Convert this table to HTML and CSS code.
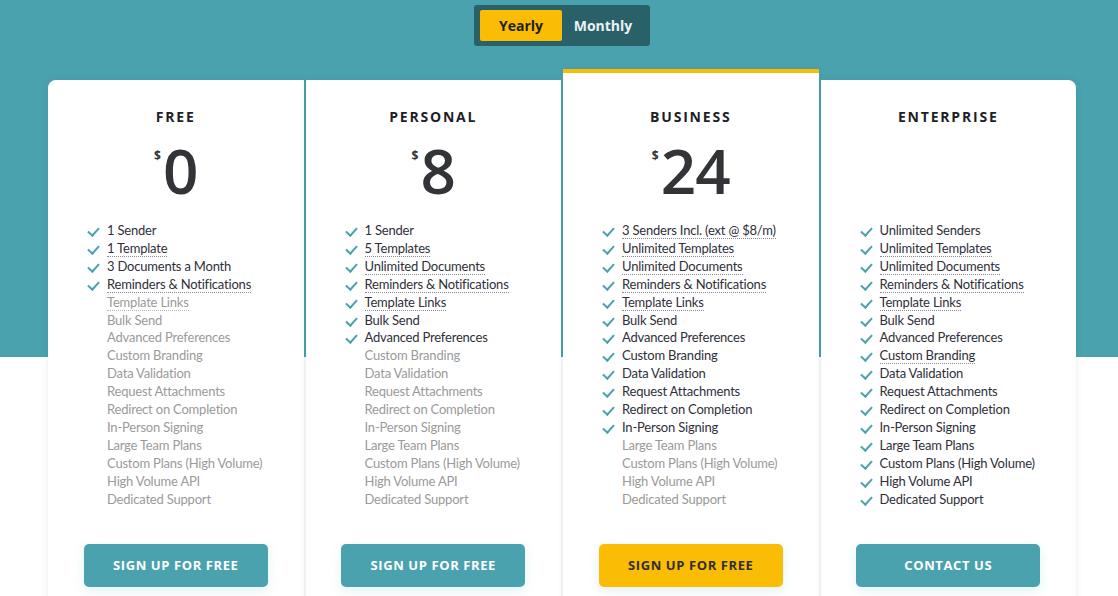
FILE: index.html
```html
<!DOCTYPE html>
<html>
<head>
<meta charset="utf-8">
<link rel="stylesheet" href="styles.css">
</head>
<body>
<div class="page">
  <div class="toggle">
    <span class="toggle-btn active">Yearly</span>
    <span class="toggle-btn">Monthly</span>
  </div>
  <div class="plans">
    <div class="card">
      <h2 class="plan-name">FREE</h2>
      <div class="price"><span class="cur">$</span>0</div>
      <ul class="features">
        <li class="on">1 Sender</li>
        <li class="on"><span class="tip">1 Template</span></li>
        <li class="on">3 Documents a Month</li>
        <li class="on"><span class="tip">Reminders &amp; Notifications</span></li>
        <li class="off"><span class="tip">Template Links</span></li>
        <li class="off">Bulk Send</li>
        <li class="off">Advanced Preferences</li>
        <li class="off">Custom Branding</li>
        <li class="off">Data Validation</li>
        <li class="off">Request Attachments</li>
        <li class="off">Redirect on Completion</li>
        <li class="off">In-Person Signing</li>
        <li class="off">Large Team Plans</li>
        <li class="off">Custom Plans (High Volume)</li>
        <li class="off">High Volume API</li>
        <li class="off">Dedicated Support</li>
      </ul>
      <a class="btn">SIGN UP FOR FREE</a>
    </div>
    <div class="card">
      <h2 class="plan-name">PERSONAL</h2>
      <div class="price"><span class="cur">$</span>8</div>
      <ul class="features">
        <li class="on">1 Sender</li>
        <li class="on"><span class="tip">5 Templates</span></li>
        <li class="on"><span class="tip">Unlimited Documents</span></li>
        <li class="on"><span class="tip">Reminders &amp; Notifications</span></li>
        <li class="on"><span class="tip">Template Links</span></li>
        <li class="on">Bulk Send</li>
        <li class="on">Advanced Preferences</li>
        <li class="off">Custom Branding</li>
        <li class="off">Data Validation</li>
        <li class="off">Request Attachments</li>
        <li class="off">Redirect on Completion</li>
        <li class="off">In-Person Signing</li>
        <li class="off">Large Team Plans</li>
        <li class="off">Custom Plans (High Volume)</li>
        <li class="off">High Volume API</li>
        <li class="off">Dedicated Support</li>
      </ul>
      <a class="btn">SIGN UP FOR FREE</a>
    </div>
    <div class="card featured">
      <h2 class="plan-name">BUSINESS</h2>
      <div class="price"><span class="cur">$</span>24</div>
      <ul class="features">
        <li class="on"><span class="tip">3 Senders Incl. (ext @ $8/m)</span></li>
        <li class="on"><span class="tip">Unlimited Templates</span></li>
        <li class="on"><span class="tip">Unlimited Documents</span></li>
        <li class="on"><span class="tip">Reminders &amp; Notifications</span></li>
        <li class="on"><span class="tip">Template Links</span></li>
        <li class="on">Bulk Send</li>
        <li class="on">Advanced Preferences</li>
        <li class="on">Custom Branding</li>
        <li class="on">Data Validation</li>
        <li class="on">Request Attachments</li>
        <li class="on">Redirect on Completion</li>
        <li class="on">In-Person Signing</li>
        <li class="off">Large Team Plans</li>
        <li class="off">Custom Plans (High Volume)</li>
        <li class="off">High Volume API</li>
        <li class="off">Dedicated Support</li>
      </ul>
      <a class="btn btn-yellow">SIGN UP FOR FREE</a>
    </div>
    <div class="card">
      <h2 class="plan-name">ENTERPRISE</h2>
      <div class="price price-empty"></div>
      <ul class="features">
        <li class="on">Unlimited Senders</li>
        <li class="on"><span class="tip">Unlimited Templates</span></li>
        <li class="on"><span class="tip">Unlimited Documents</span></li>
        <li class="on"><span class="tip">Reminders &amp; Notifications</span></li>
        <li class="on"><span class="tip">Template Links</span></li>
        <li class="on">Bulk Send</li>
        <li class="on">Advanced Preferences</li>
        <li class="on"><span class="tip">Custom Branding</span></li>
        <li class="on">Data Validation</li>
        <li class="on">Request Attachments</li>
        <li class="on">Redirect on Completion</li>
        <li class="on">In-Person Signing</li>
        <li class="on">Large Team Plans</li>
        <li class="on">Custom Plans (High Volume)</li>
        <li class="on">High Volume API</li>
        <li class="on">Dedicated Support</li>
      </ul>
      <a class="btn">CONTACT US</a>
    </div>
  </div>
</div>
</body>
</html>
```

FILE: styles.css
```css
html, body {
  margin: 0;
  padding: 0;
}
body {
  background: linear-gradient(#4aa2ae 0, #4aa2ae 357px, #ffffff 357px);
  font-family: "Lato", "Liberation Sans", sans-serif;
  color: #2f2f3a;
  overflow: hidden;
}
.page {
  width: 1028px;
  margin-left: 48px;
}
.toggle {
  display: flex;
  width: 164px;
  margin: 5px auto 0;
  padding: 5px 6px;
  background: #2a6068;
  border-radius: 3px;
}
.toggle-btn {
  flex: 1;
  height: 31px;
  line-height: 31px;
  text-align: center;
  font-family: "Open Sans", "Liberation Sans", sans-serif;
  font-weight: 700;
  font-size: 14px;
  color: #e8f2f3;
  border-radius: 2px;
}
.toggle-btn.active {
  background: #fbbc05;
  color: #1d1d1d;
}
.plans {
  display: flex;
  gap: 2px;
  align-items: flex-start;
  margin-top: 34px;
}
.card {
  flex: 1;
  background: #fff;
  padding-top: 27px;
  padding-bottom: 40px;
  box-shadow: 0 0 6px rgba(40, 80, 90, 0.10);
  display: flex;
  flex-direction: column;
}
.card:first-child {
  border-top-left-radius: 8px;
}
.card:last-child {
  border-top-right-radius: 8px;
}
.card.featured {
  margin-top: -11px;
  border-top: 4px solid #fbbc05;
  padding-top: 34px;
}
.plan-name {
  margin: 0;
  text-align: center;
  font-family: "Open Sans", "Liberation Sans", sans-serif;
  font-weight: 700;
  font-size: 14px;
  line-height: 20px;
  letter-spacing: 1.8px;
  color: #1e1e28;
}
.price {
  height: 62px;
  margin-top: 12px;
  text-align: center;
  font-family: "Open Sans", "Liberation Sans", sans-serif;
  font-weight: 600;
  font-size: 62px;
  line-height: 62px;
  color: #333438;
  letter-spacing: -1px;
}
.cur {
  display: inline-block;
  vertical-align: top;
  font-size: 12px;
  line-height: 12px;
  font-weight: 700;
  margin-top: 11px;
  margin-right: 2px;
  letter-spacing: 0;
}
.features {
  list-style: none;
  margin: 21px 0 0;
  padding: 0 0 0 39px;
  font-size: 13px;
  line-height: 17.9px;
  letter-spacing: -0.2px;
}
.features li {
  position: relative;
  padding-left: 20px;
  white-space: nowrap;
}
.features li.on::before {
  content: "";
  position: absolute;
  left: 1px;
  top: 5px;
  width: 9px;
  height: 5px;
  border-left: 2px solid #4aa2ae;
  border-bottom: 2px solid #4aa2ae;
  transform: rotate(-48deg);
  transform-origin: center;
}
.features li.off {
  color: #9a9a9a;
}
.tip {
  border-bottom: 1px dotted #8a8a96;
}
.off .tip {
  border-bottom-color: #b5b5b5;
}
.btn {
  display: block;
  align-self: center;
  width: 184px;
  height: 43px;
  line-height: 42px;
  margin-top: 35px;
  text-align: center;
  border-radius: 5px;
  background: #4aa2ae;
  color: #fff;
  font-family: "Open Sans", "Liberation Sans", sans-serif;
  font-weight: 700;
  font-size: 13px;
  letter-spacing: 0.6px;
  box-shadow: 0 4px 12px rgba(74, 162, 174, 0.15);
}
.btn-yellow {
  background: #fbbc05;
  color: #2f2f2f;
}
```
